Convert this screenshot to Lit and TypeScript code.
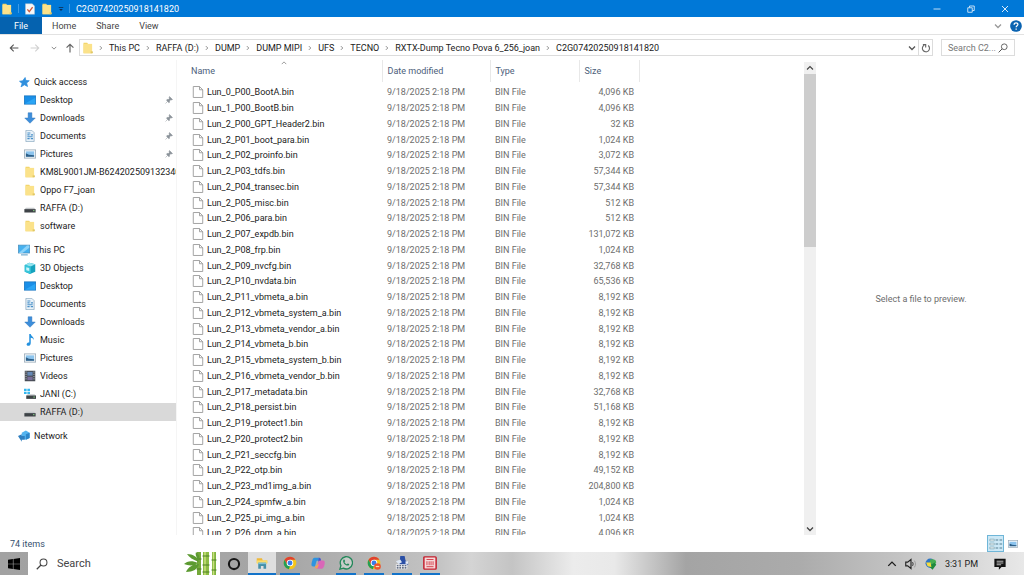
import { LitElement, html, svg, css, nothing } from "lit";
import { customElement, state } from "lit/decorators.js";

const folder = svg`<path d="M2 1h5l1 1.5h5V15H2z" fill="#f2d468"/><path d="M2 2.500h11.500V15H2z" fill="#fbe28a"/><path d="M11.500 12.500h3V15h-3z" fill="#e0c766"/>`;
const desktop = svg`<rect x="0.5" y="2.5" width="15" height="11" fill="#1a8fe8" stroke="#1573bd"/><path d="M1 13 15 5v8z" fill="#2aa5f5"/>`;
const documents = svg`<path d="M2.500 .5h8l3 3v12h-11z" fill="#e9f2f9" stroke="#8ba9c0"/><path d="M4.500 4h4M4.500 6.500h3M9 6.500h3M4.500 9h7M4.500 11.500h3M9 11.500h3" stroke="#4a90c8" stroke-width="1.400"/>`;
const downloads = svg`<path d="M5.500 1h5v7H15l-7 7-7-7h4.500z" fill="#3d8edb" stroke="#2a72b8" stroke-width=".6"/>`;
const pictures = svg`<rect x=".5" y="2.500" width="15" height="11" fill="#f2f6f9" stroke="#93a5b3"/><rect x="2.500" y="4.500" width="11" height="7" fill="#8cc4ee"/><path d="M2.500 11.500V7l4 2 7 .8v1.700z" fill="#2d5f88"/>`;
const drive = svg`<path d="M2.500 7.500h11l2 2.500H.5z" fill="#c4c8ca"/><rect x=".5" y="9.500" width="15" height="4.500" fill="#3e4347"/><rect x="12" y="11" width="2" height="1.200" fill="#8de08a"/>`;
const icons: Record<string, unknown> = {
  folder, desktop, documents, downloads, pictures, drive,
  star: svg`<path d="m9.500 2 1 4 4.500.3-3.500 3 1.200 4.700-4.200-2.300L4 14.500l1.500-4.500L2 7l4.300-.6z" fill="#2f8fdd" stroke="#2f8fdd"/>`,
  pc: svg`<rect x=".5" y="1.500" width="15" height="10.500" fill="#47b1ef" stroke="#4b91bf"/><path d="M1 12 12 2h3v3L6 12z" fill="#8bd3fa"/><path d="M4 14.500h9" stroke="#6aa7cc" stroke-width="1.500"/>`,
  cube: svg`<path d="M1 4 7 1l8 2v10l-7 3-7-3z" fill="#16a2bd"/><path d="m1 4 6-3 8 2-6 3z" fill="#93e4ef"/><path d="m1 4 8 2v10l-8-3z" fill="#37c5da"/><path d="M3 7l4 1v4l-4-1z" fill="#c9f5fa"/>`,
  music: svg`<path d="M7 0h2c.3 3 4.500 3.500 4 8-.8-2-2-2.800-4-3v7c0 5-6 4.500-5.500 1.500C4 11.500 5.500 11 7 11.300z" fill="#2491df"/>`,
  videos: svg`<rect x="1" y="1" width="14" height="14" fill="#484d55"/><path d="M4.500 2.500h7v5h-7z" fill="#6688b5"/><path d="M4.500 9h7v4.500h-7z" fill="#7a6f9a"/><path d="M2.700 2v12M13.300 2v12" stroke="#c5c9ce" stroke-width="1.200" stroke-dasharray="1.500 1.500"/>`,
  cdrive: svg`<path d="M0 1h3.500v3H0zM4.500 1H8v3H4.500zM0 5h3.500v3H0zM4.500 5H8v3H4.500z" fill="#35b7ee"/><path d="M5 8h9l2 2.500H3z" fill="#d5d8da"/><rect x="3" y="10" width="13" height="4.500" fill="#3e4347"/><rect x="12.500" y="11.500" width="2" height="1.200" fill="#8de08a"/>`,
  network: svg`<path d="m5 3.500 5.500-2.800 5 2.800v7l-5 2.500-5.500-2z" fill="#54b4ef"/><path d="m10.500 5.500 5-2v7l-5 2.500z" fill="#2d86c9"/><path d="m0 8 5-2.500V8h4v5H5v2.500z" fill="#2f7fc0"/>`,
  file: svg`<path d="M1.700.7h8.300L14.300 5v10.300H1.700z" fill="#fff" stroke="#9a9a9a" stroke-width="1.200"/><path d="M10 .7V5h4.300" fill="none" stroke="#9a9a9a" stroke-width="1.200"/>`,
  check: svg`<path d="M2 1h9l3 3v11H2z" fill="#f7f7f7" stroke="#b8c4d0" stroke-width=".6"/><path d="m4.500 8.500 2.500 3 4.500-6" fill="none" stroke="#d0593a" stroke-width="1.800"/>`,
  more: svg`<path d="M2 4h12" stroke="#0b2f57" stroke-width="2.200"/><path d="M3 8h10L8 13.500z" fill="#0b2f57"/>`,
  back: svg`<path d="M15 8H2m5.500-5.500L2 8l5.500 5.500" fill="none" stroke="#555" stroke-width="1.700"/>`,
  forward: svg`<path d="M1 8h13M8.500 2.500 14 8l-5.500 5.500" fill="none" stroke="#d0d0d0" stroke-width="1.700"/>`,
  up: svg`<path d="M8 15V2M2.500 7.500 8 2l5.500 5.500" fill="none" stroke="#666" stroke-width="1.900"/>`,
  chevdown: svg`<path d="m2 5 6 6 6-6" fill="none" stroke="currentColor" stroke-width="2.600"/>`,
  chevup: svg`<path d="m2 11 6-6 6 6" fill="none" stroke="currentColor" stroke-width="2.200"/>`,
  chevright: svg`<path d="m5 3 5 5-5 5" fill="none" stroke="#777" stroke-width="2.200"/>`,
  refresh: svg`<path d="M5 3.500A5.700 5.700 0 1 0 11.500 4M3 2.500h4.500V7" fill="none" stroke="#666" stroke-width="1.800"/>`,
  search: svg`<circle cx="10" cy="6" r="4.600" fill="none" stroke="currentColor" stroke-width="1.400"/><path d="M6.700 9.300 1 15" stroke="currentColor" stroke-width="1.600"/>`,
  pin: svg`<path d="m9 1 6 6-2 .8-1.500-.3-2.500 2.500.2 2.500-1.500 1L3 8.300l1-1.500 2.500.2L9 4.500l-.8-1.700zM5.500 10.500 1 15" fill="#8b9299" stroke="#8b9299"/>`,
  min: svg`<path d="M1 8h14" stroke="#fff" stroke-width="1.500"/>`,
  restore: svg`<path d="M1.500 5.500h9v9h-9zM5 5V2h9.500v9H11" fill="none" stroke="#fff" stroke-width="1.500"/>`,
  close: svg`<path d="m2 2 12 12M14 2 2 14" stroke="#fff" stroke-width="1.700"/>`,
  help: svg`<circle cx="8" cy="8" r="7.800" fill="#0a63b1"/><path d="M5.500 6.200C5.500 2.800 10.700 3 10.500 6c-.1 1.700-2.300 1.800-2.300 3.800M8.200 11.200v1.800" fill="none" stroke="#fff" stroke-width="1.700"/>`,
  details: svg`<path d="M1 2.500h5v2H1zM1 7h5v2H1zM1 11.500h5v2H1z" fill="#fff" stroke="#7aa0ae" stroke-width=".8"/><path d="M7.500 3.500h3M12 3.500h3M7.500 8h3M12 8h3M7.500 12.500h3M12 12.500h3" stroke="#557f91" stroke-width="1.200"/>`,
  windows: svg`<path d="m0 2.300 6.500-.9v6.200H0zM7.300 1.300 16 0v7.600H7.300zM0 8.400h6.500v6.200L0 13.700zM7.300 8.400H16V16l-8.700-1.300z" fill="#000"/>`,
  ring: svg`<circle cx="8" cy="8" r="5.800" fill="none" stroke="#161616" stroke-width="2.400"/>`,
  explorer: svg`<path d="M1 1.500h7l1 3h6V8H1z" fill="#f0b93a"/><path d="M1 4.500h14V9H1z" fill="#fbdc6c"/><path d="M3 7.500h10.500v8h-3.500V12H6.500v3.500H3z" fill="#4590a8"/><path d="M3 7.500h10.500v2H3z" fill="#7fc0d8"/>`,
  chrome: svg`<circle cx="8" cy="8" r="7.200" fill="#f5c51b"/><path d="M1.800 4.400A7.200 7.200 0 0 1 14.200 4.400H8L4.700 10z" fill="#df4131"/><path d="M1.800 4.400 4.700 10 8 11.800l-1.300 3.300A7.200 7.200 0 0 1 1.800 4.400z" fill="#239e55"/><circle cx="8" cy="8" r="3.700" fill="#fff"/><circle cx="8" cy="8" r="2.800" fill="#397de8"/>`,
  chromeBadge: svg`<circle cx="8" cy="8" r="7.200" fill="#f5c51b"/><path d="M1.800 4.400A7.200 7.200 0 0 1 14.200 4.400H8L4.700 10z" fill="#df4131"/><path d="M1.800 4.400 4.700 10 8 11.800l-1.300 3.300A7.200 7.200 0 0 1 1.800 4.400z" fill="#239e55"/><circle cx="8" cy="8" r="3.700" fill="#fff"/><circle cx="8" cy="8" r="2.800" fill="#397de8"/><circle cx="12" cy="12" r="3.800" fill="#e9562f"/><path d="M10 12h4" stroke="#ffd9b0" stroke-width="1.400"/>`,
  copilot: svg`<path d="M4 2h5.500c1.200 0 1.500 1 2 3l-5 .5L4.500 12H2.500C-.5 12 .5 8.500 1.500 5 2 3 2.700 2 4 2z" fill="#2d94e0"/><path d="M9 2c1.500 0 2 1 2.500 3H14c2 0 2 2.500 1.400 5-.6 2.600-1.400 4.500-3.400 4.500H7c-1.500 0-2-1-2.500-3 2 0 2.500-.5 3-2.500L9 5z" fill="#d967b8"/><path d="M9 2c1.500 0 2 1 2.500 3-2 0-3 .5-3.500 2.500z" fill="#4458c8"/><path d="M4.500 11.500c2 0 2.500-.5 3-2.500l1.500 1-2 4.500c-1.500 0-2-1-2.500-3z" fill="#f3a552"/>`,
  whatsapp: svg`<path d="M1 15l1.200-4A7 7 0 1 1 5 13.900z" fill="#e8f3ec" fill-opacity=".4" stroke="#23885a" stroke-width="1.500"/><path d="M5 4.500c1-1 1.500-.2 2 1.300L6.300 7c.7 1.300 1.500 2 2.700 2.500l1-1c1.500.5 2.300 1 1.300 2C8.500 12.500 3.500 7.500 5 4.500z" fill="#23885a"/>`,
  tool: svg`<path d="M6 0h5l1 5 3 2v3H5z" fill="#2b4fa5"/><path d="m1 6 5-2 2 3-4 2z" fill="#dce5f2"/><path d="M12 6h3v3h-3z" fill="#e8edf5"/><path d="M1 9.500h13V15H1z" fill="#f0f1f4"/><path d="M2 11.200h11M2 13.500h11" stroke="#34445f" stroke-width="1.300" stroke-dasharray="2 1"/>`,
  redbox: svg`<rect x="1" y="1" width="14" height="14" rx="1" fill="#f6dada" stroke="#c3202e" stroke-width="1.700"/><path d="M4 4h8M4 12.200h8M4.500 6v4.500M7 6v4.500M9.200 6v4.500M11.500 6v4.500" fill="none" stroke="#d4424d" stroke-width="1.100"/>`,
  sound: svg`<path d="M1 5.500h2.500L8 2v12l-4.500-3.500H1z" fill="none" stroke="#222" stroke-width="1.500"/><path d="M10 5.500c1 1.500 1 3.500 0 5" fill="none" stroke="#333" stroke-width="1.300"/><path d="M12.500 3.500c2 3 2 6 0 9" fill="none" stroke="#999" stroke-width="1.200"/>`,
  idm: svg`<circle cx="7" cy="7" r="6.300" fill="#2f75c6"/><path d="M7 2c4-1 8 0 8 4l-4 4-5-3z" fill="#47ae51"/><path d="M8 9l5-3 2 3-5 6.500-4-4z" fill="#1f8a3c"/><path d="M1.500 6l6 0 1 6-5-1z" fill="#f6db3f"/>`,
  notice: svg`<path d="M.5 1h15v11H10l-3.500 3.500V12h-6z" fill="#111"/><path d="M3.500 4.300h9M3.500 6.700h9M3.500 9h6" stroke="#ddd" stroke-width="1.100"/>`,
};

const icon = (name: string, size = "") =>
  html`<svg class="icon ${size}" viewBox="0 0 16 16" aria-hidden="true">${icons[name]}</svg>`;

const crumbs = ["This PC", "RAFFA (D:)", "DUMP", "DUMP MIPI", "UFS", "TECNO", "RXTX-Dump Tecno Pova 6_256_joan", "C2G07420250918141820"];

interface Place { icon: string; label: string; pinned?: boolean; current?: boolean }
const groups: { icon: string; label: string; items: Place[] }[] = [
  { icon: "star", label: "Quick access", items: [
    { icon: "desktop", label: "Desktop", pinned: true },
    { icon: "downloads", label: "Downloads", pinned: true },
    { icon: "documents", label: "Documents", pinned: true },
    { icon: "pictures", label: "Pictures", pinned: true },
    { icon: "folder", label: "KM8L9001JM-B62420250913234023" },
    { icon: "folder", label: "Oppo F7_joan" },
    { icon: "drive", label: "RAFFA (D:)" },
    { icon: "folder", label: "software" },
  ] },
  { icon: "pc", label: "This PC", items: [
    { icon: "cube", label: "3D Objects" },
    { icon: "desktop", label: "Desktop" },
    { icon: "documents", label: "Documents" },
    { icon: "downloads", label: "Downloads" },
    { icon: "music", label: "Music" },
    { icon: "pictures", label: "Pictures" },
    { icon: "videos", label: "Videos" },
    { icon: "cdrive", label: "JANI (C:)" },
    { icon: "drive", label: "RAFFA (D:)", current: true },
  ] },
  { icon: "network", label: "Network", items: [] },
];

const files: [string, string][] = [
  ["Lun_0_P00_BootA.bin", "4,096"], ["Lun_1_P00_BootB.bin", "4,096"], ["Lun_2_P00_GPT_Header2.bin", "32"],
  ["Lun_2_P01_boot_para.bin", "1,024"], ["Lun_2_P02_proinfo.bin", "3,072"], ["Lun_2_P03_tdfs.bin", "57,344"],
  ["Lun_2_P04_transec.bin", "57,344"], ["Lun_2_P05_misc.bin", "512"], ["Lun_2_P06_para.bin", "512"],
  ["Lun_2_P07_expdb.bin", "131,072"], ["Lun_2_P08_frp.bin", "1,024"], ["Lun_2_P09_nvcfg.bin", "32,768"],
  ["Lun_2_P10_nvdata.bin", "65,536"], ["Lun_2_P11_vbmeta_a.bin", "8,192"], ["Lun_2_P12_vbmeta_system_a.bin", "8,192"],
  ["Lun_2_P13_vbmeta_vendor_a.bin", "8,192"], ["Lun_2_P14_vbmeta_b.bin", "8,192"], ["Lun_2_P15_vbmeta_system_b.bin", "8,192"],
  ["Lun_2_P16_vbmeta_vendor_b.bin", "8,192"], ["Lun_2_P17_metadata.bin", "32,768"], ["Lun_2_P18_persist.bin", "51,168"],
  ["Lun_2_P19_protect1.bin", "8,192"], ["Lun_2_P20_protect2.bin", "8,192"], ["Lun_2_P21_seccfg.bin", "8,192"],
  ["Lun_2_P22_otp.bin", "49,152"], ["Lun_2_P23_md1img_a.bin", "204,800"], ["Lun_2_P24_spmfw_a.bin", "1,024"],
  ["Lun_2_P25_pi_img_a.bin", "1,024"], ["Lun_2_P26_dpm_a.bin", "4,096"],
];

const tasks: [string, string, string][] = [
  ["explorer", "File Explorer", "active"], ["chrome", "Chrome", "running"], ["copilot", "Copilot", ""],
  ["whatsapp", "WhatsApp", "running"], ["chromeBadge", "Chrome profile", "running"],
  ["tool", "Flash tool", "running"], ["redbox", "Box utility", "running"],
];

@customElement("app-root")
export class AppRoot extends LitElement {
  @state() private clock = "3:31 PM";

  static styles = css`
    :host { display: flex; flex-direction: column; height: 100vh; overflow: hidden; background: #fff;
      color: #1b1b1b; font: 9px/12px Roboto, "Open Sans", sans-serif; }
    * { box-sizing: border-box; }
    button, input { font: inherit; color: inherit; background: none; border: 0; padding: 0; margin: 0; outline: 0; }
    button { display: inline-flex; align-items: center; justify-content: center; }
    a { color: inherit; text-decoration: none; }
    .icon { width: 12px; height: 12px; flex: none; display: block; }
    .xs { width: 6px; height: 6px; }
    .sm { width: 8px; height: 8px; }
    .md { width: 10px; height: 10px; }
    .lg { width: 14px; height: 14px; }

    .title { display: flex; align-items: center; height: 17px; flex: none; padding-right: 2px; background: #0078d7; color: #fff; }
    .quick { display: flex; align-items: center; gap: 5px; padding: 0 6px 0 1px; }
    .quick i { width: 1px; height: 9px; background: #3c9be6; }
    .title h1 { flex: 1; margin: 0; font: inherit; }
    .title .ctl { width: 34px; height: 17px; }

    .ribbon { display: flex; align-items: center; height: 18px; flex: none; border-bottom: 1px solid #e2e2e2; color: #444; }
    .ribbon button { height: 17px; padding: 0 10px; }
    .ribbon .file { width: 42px; background: #0562af; color: #fff; }
    .ribbon .space { flex: 1; }
    .ribbon .fold { padding: 0 8px; color: #999; }
    .ribbon .help { padding: 0 2px 0 0; }

    .bar { display: flex; align-items: center; height: 25px; flex: none; padding: 0 9px; }
    .bar .nav { width: 21px; height: 17px; flex: none; justify-content: flex-start; }
    .bar .small { width: 14px; color: #888; }
    .bar .upbtn { width: 14px; }
    .addr { flex: 1; display: flex; align-items: center; height: 17px; border: 1px solid #dcdcdc; padding-left: 2px; min-width: 0; }
    .addr ol { flex: 1; display: flex; gap: 5px; margin: 0; padding: 0 0 0 4px; list-style: none; min-width: 0; overflow: hidden; }
    .addr li { display: flex; align-items: center; gap: 5px; white-space: nowrap; }
    .addr .drop { width: 12px; height: 15px; color: #555; }
    .addr .refresh { width: 14px; height: 15px; border-left: 1px solid #dcdcdc; }
    .find { display: flex; align-items: center; width: 74px; height: 17px; margin-left: 8px; padding: 0 6px; border: 1px solid #dcdcdc; color: #555; }
    .find input { flex: 1; min-width: 0; }
    input::placeholder { color: inherit; opacity: 1; }
    .find input::placeholder { color: #777; }

    .main { flex: 1; display: grid; grid-template-columns: 176px 1fr 12px 208px; min-height: 0; }
    .tree { padding-top: 13px; overflow: hidden; }
    .tree ul { margin: 0 0 6px; padding: 0; list-style: none; }
    .tree a { display: flex; align-items: center; gap: 4px; height: 18px; padding-left: 24px; white-space: nowrap; }
    .tree a.root { padding-left: 18px; }
    .tree a[aria-current] { background: #d9d9d9; }
    .tree .name { flex: 1; overflow: hidden; }
    .tree .pin { margin-right: 3px; }

    .list { overflow: hidden; border-left: 1px solid #f5f5f5; padding-left: 5px; min-width: 0; }
    table { border-collapse: collapse; table-layout: fixed; width: 457px; }
    .c-name { width: 200px; } .c-date { width: 108px; } .c-type { width: 89px; } .c-size { width: 60px; }
    th { height: 22px; padding: 0 0 0 5px; text-align: left; font-weight: 400; color: #4c607a; border-right: 1px solid #e8e8e8; position: relative; }
    th:first-child { padding-left: 9px; }
    th .icon { position: absolute; top: 0; left: 99px; color: #888; }
    tbody::before { content: ""; display: block; height: 2px; }
    td { height: 16px; padding: 0 0 0 5px; color: #6d6d6d; white-space: nowrap; line-height: 12px; }
    tr:nth-child(4n) td { height: 15px; }
    td:first-child { padding-left: 10px; color: #1b1b1b; }
    td:last-child { text-align: right; padding-right: 5px; }
    .cell { display: flex; align-items: center; gap: 3px; }

    .scroll { display: flex; flex-direction: column; background: #f0f0f0; margin-top: 2px; }
    .scroll button { height: 12px; flex: none; color: #444; }
    .track { flex: 1; display: grid; grid-template-rows: 5fr 8fr; }
    .thumb { background: #cdcdcd; }
    .preview { display: flex; align-items: center; justify-content: center; padding: 2px 0 0 2px; color: #6d6d6d; }
    .preview p { margin: 0; }

    .status { display: flex; align-items: center; height: 17px; flex: none; padding: 0 3px 0 10px; color: #35506e; }
    .status span { flex: 1; }
    .status button { width: 17px; height: 17px; }
    .status .on { background: #cce8f6; border: 1px solid #6fb6d8; }

    .task { display: flex; align-items: stretch; height: 23px; flex: none; color: #1b1b1b;
      background: linear-gradient(90deg, #a2a2a2 0, #a6a6a6 28%, #c4c4c4 43%, #d4d4d4 46%, #c4c4c4 50%, #ececec 56%, #e9e9e9 60%, #a4a4a4 67%, #ababab 78%, #c4c4c4 88%, #e8e8e8 100%); }
    .start { width: 28px; }
    .seek { display: flex; align-items: center; width: 192px; padding-left: 8px; gap: 9px; background: #fff; color: #444; font-size: 11px; overflow: hidden; }
    .seek input { flex: 1; min-width: 0; }
    .bamboo { width: 36px; height: 23px; flex: none; }
    .cortana { width: 28px; }
    .apps { display: flex; gap: 8px; }
    .apps button { width: 20px; border-bottom: 2px solid transparent; }
    .apps .running { border-bottom-color: #1373c9; }
    .apps .active { width: 28px; background: #dedede; border-bottom-color: #1373c9; margin-right: -4px; }
    .tray { display: flex; align-items: center; gap: 8px; margin-left: auto; padding-right: 18px; }
    .tray .msg { margin-left: 8px; }
  `;

  private place(p: Place, root = false) {
    return html`<a href="#" class=${root ? "root" : ""} aria-current=${p.current ? "page" : nothing}>
      ${icon(p.icon)}<span class="name">${p.label}</span>${p.pinned ? html`<span class="pin">${icon("pin", "sm")}</span>` : nothing}</a>`;
  }

  render() {
    return html`
      <header class="title">
        <div class="quick">${icon("folder")}<i></i>${icon("check")}${icon("folder")}${icon("more", "xs")}<i></i></div>
        <h1>C2G07420250918141820</h1>
        <button class="ctl" aria-label="Minimize">${icon("min", "sm")}</button>
        <button class="ctl" aria-label="Restore">${icon("restore", "sm")}</button>
        <button class="ctl" aria-label="Close">${icon("close", "sm")}</button>
      </header>
      <div class="ribbon">
        <button class="file">File</button><button>Home</button><button>Share</button><button>View</button>
        <span class="space"></span>
        <button class="fold" aria-label="Expand the ribbon">${icon("chevdown", "sm")}</button>
        <button class="help" aria-label="Help">${icon("help")}</button>
      </div>
      <div class="bar">
        <button class="nav" aria-label="Back">${icon("back", "md")}</button>
        <button class="nav" aria-label="Forward">${icon("forward", "md")}</button>
        <button class="nav small" aria-label="Recent locations">${icon("chevdown", "xs")}</button>
        <button class="nav upbtn" aria-label="Up">${icon("up", "md")}</button>
        <div class="addr">
          ${icon("folder")}
          <ol>${crumbs.map((c) => html`<li>${icon("chevright", "xs")}<button>${c}</button></li>`)}</ol>
          <button class="drop" aria-label="Previous locations">${icon("chevdown", "sm")}</button>
          <button class="refresh" aria-label="Refresh">${icon("refresh", "md")}</button>
        </div>
        <label class="find"><input type="text" aria-label="Search folder" placeholder="Search C2..." />${icon("search", "md")}</label>
      </div>
      <div class="main">
        <nav class="tree" aria-label="Folders">
          ${groups.map((g) => html`<ul><li>${this.place(g, true)}</li>${g.items.map((p) => html`<li>${this.place(p)}</li>`)}</ul>`)}
        </nav>
        <div class="list">
          <table>
            <colgroup><col class="c-name" /><col class="c-date" /><col class="c-type" /><col class="c-size" /></colgroup>
            <thead><tr><th>Name${icon("chevup", "xs")}</th><th>Date modified</th><th>Type</th><th>Size</th></tr></thead>
            <tbody>${files.map(([name, size]) => html`<tr>
              <td><div class="cell">${icon("file")}<span>${name}</span></div></td>
              <td>9/18/2025 2:18 PM</td><td>BIN File</td><td>${size} KB</td></tr>`)}</tbody>
          </table>
        </div>
        <div class="scroll">
          <button aria-label="Scroll up">${icon("chevup", "sm")}</button>
          <div class="track"><div class="thumb"></div></div>
          <button aria-label="Scroll down">${icon("chevdown", "sm")}</button>
        </div>
        <aside class="preview"><p>Select a file to preview.</p></aside>
      </div>
      <footer class="status"><span>74 items</span>
        <button class="on" aria-label="Details view">${icon("details", "lg")}</button>
        <button aria-label="Large icons view">${icon("pictures", "md")}</button>
      </footer>
      <div class="task">
        <button class="start" aria-label="Start">${icon("windows")}</button>
        <label class="seek">${icon("search")}<input type="text" aria-label="Search the computer" placeholder="Search" />
          <svg class="bamboo" viewBox="0 0 36 23" aria-hidden="true">
            <path d="M15 0v23" stroke="#74a83a" stroke-width="4"/><path d="M22 0v23" stroke="#8cbc45" stroke-width="6"/><path d="M30 0v23" stroke="#7fb540" stroke-width="4"/>
            <path d="M21 0v23M29.500 0v23" stroke="#c9e07c" stroke-width="1.500"/>
            <path d="M12.500 7h5M12.500 17h5M18.500 4h7M18.500 13h7M18.500 20h7M27.500 8h5M27.500 18h5" stroke="#4d7f25"/>
            <path d="M15 10C9 8 5 5 3 2c6 0 11 3 12 8zM14 11C8 8 3 9 0 12c5 2 10 2 14-1zM15 12c-6 0-11 3-13 8 7 0 12-3 13-8zM15 8c-3-3-4-5-3-8 3 2 4 5 3 8z" fill="#5c9a31"/>
          </svg></label>
        <button class="cortana" aria-label="Cortana">${icon("ring", "lg")}</button>
        <div class="apps">${tasks.map(([i, label, cls]) => html`<button class=${cls} aria-label=${label}>${icon(i, i === "explorer" ? "" : "lg")}</button>`)}</div>
        <div class="tray">${icon("chevup", "md")}${icon("sound")}${icon("idm")}<time>${this.clock}</time><span class="msg">${icon("notice")}</span></div>
      </div>`;
  }
}
